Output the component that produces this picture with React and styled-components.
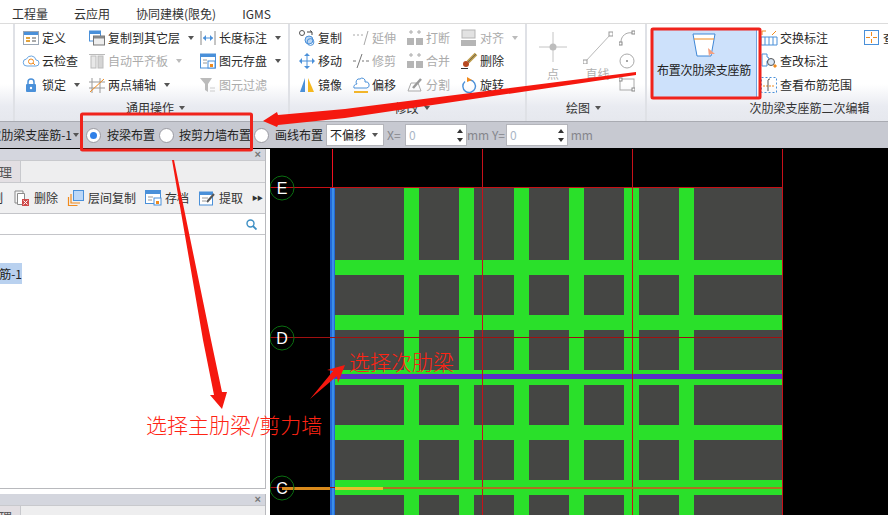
import React from 'react';
import styled, { createGlobalStyle } from 'styled-components';

const Global = createGlobalStyle`
  html, body { margin: 0; padding: 0; background: #fff; }
  * { box-sizing: border-box; }
`;
const FONT = `"Noto Sans CJK SC", "Liberation Sans", sans-serif`;

const Page = styled.div`
  position: relative; width: 888px; height: 515px; overflow: hidden;
  font: 12px/1 ${FONT}; color: #2a2a2a; background: #fff;
  display: flex; flex-direction: column;
`;
const MenuBar = styled.div`
  height: 24px; flex: none; display: flex; align-items: center; gap: 26px;
  padding: 5px 0 0 12px; border-bottom: 1px solid #dcdcdc; color: #333;
  background: #fff;
`;
const Ribbon = styled.div`
  height: 98px; flex: none; display: flex;
  background: linear-gradient(#fff 0%, #fff 62%, #e9ebf1 85%, #e6e8ee 100%);
  border-bottom: 1px solid #a9abb2;
`;
const Group = styled.div`
  width: ${p => p.$w}px; flex: none; display: flex; flex-direction: column;
  padding: 2px 0 4px ${p => p.$pad || 0}px; position: relative; overflow: hidden;
  border-right: ${p => p.$last ? 'none' : '2px solid #dfe1e6'};
`;
const GroupBody = styled.div`
  display: flex; height: 74px; flex: none;
`;
const Col = styled.div`
  width: ${p => p.$w}px; flex: none; display: flex; flex-direction: column;
`;
const Item = styled.div`
  height: 23.5px; display: flex; align-items: center; gap: 3px; white-space: nowrap;
  color: ${p => p.$off ? '#ababab' : '#2a2a2a'};
`;
const IconBox = styled.span`
  width: 16px; height: 17px; flex: none; display: inline-flex; align-items: center; justify-content: center;
  svg { display: block; overflow: visible; }
`;
const Caret = styled.span`
  width: 0; height: 0; margin-left: ${p => p.$gap ?? 5}px; border: 3px solid transparent;
  border-top: 4px solid ${p => p.$off ? '#bbb' : '#555'}; border-bottom: 0;
`;
const GroupTitle = styled.div`
  height: 16px; display: flex; align-items: center; justify-content: center; color: #333;
  margin-left: ${p => p.$shift || 0}px;
`;
const BigTool = styled.div`
  width: ${p => p.$w}px; flex: none; display: flex; flex-direction: column; align-items: center;
  color: #b0b0b0; padding-top: 4px; gap: 4px;
`;
const PrimaryButton = styled.div`
  width: 106px; height: 70px; margin: 2px 4px 0 4px; flex: none;
  background: #cde1fb; border: 1px solid #6fa3df;
  display: flex; flex-direction: column; align-items: center; padding-top: 4px; gap: 7px;
  color: #222; white-space: nowrap; letter-spacing: -0.02em;
`;
const OptionBar = styled.div`
  height: 27px; flex: none; display: flex; align-items: center; background: #c7c9d1;
  border-bottom: 1px solid #000; white-space: nowrap; color: #222;
`;
const Clipped = styled.div`
  width: 72px; overflow: hidden; display: flex; justify-content: flex-end; flex: none; margin-right: 1px;
`;
const Radio = styled.span`
  width: 15px; height: 15px; border-radius: 50%; background: #fff; border: 1px solid #9a9aa2; flex: none;
  display: inline-flex; align-items: center; justify-content: center; margin: ${p => p.$m};
  &::after { content: ''; width: 7px; height: 7px; border-radius: 50%; background: ${p => p.$on ? '#2f80e8' : 'transparent'}; }
`;
const OptionLabel = styled.span`
  width: ${p => p.$w}px; flex: none; color: ${p => p.$off ? '#85868c' : '#222'};
  font-size: 12px;
`;
const Select = styled.div`
  width: 58px; height: 22px; background: #fff; border: 1px solid #b4b5bb; display: flex; align-items: center;
  justify-content: space-between; padding: 0 5px 0 3px; flex: none; margin-right: 3px;
`;
const Spin = styled.div`
  width: 62px; height: 22px; background: #fff; border: 1px solid #b4b5bb; flex: none; display: flex;
  align-items: center; justify-content: space-between; padding: 0 3px 0 3px; color: #a9b6c6;
`;
const SpinArrows = styled.span`
  display: flex; flex-direction: column; gap: 5px;
  &::before, &::after { content: ''; width: 0; height: 0; border: 3px solid transparent; }
  &::before { border-bottom: 4px solid #333; border-top: 0; }
  &::after { border-top: 4px solid #333; border-bottom: 0; }
`;
const Main = styled.div`
  flex: 1; min-height: 0; display: flex;
`;
const Side = styled.div`
  width: 270px; flex: none; display: flex; flex-direction: column; gap: 5px; padding-right: 4px; background: #fff;
`;
const Panel = styled.div`
  flex: ${p => p.$fill ? 1 : 'none'}; height: ${p => p.$fill ? 'auto' : '21px'}; min-height: 0; display: flex; flex-direction: column;
  border-right: 1px solid #b8b9bd; border-bottom: ${p => p.$fill ? '1px solid #b8b9bd' : 'none'}; overflow: hidden;
`;
const PanelHead = styled.div`
  height: 11px; flex: none; background: #d4d6de; display: flex; justify-content: flex-end; align-items: center;
  padding-right: 4px; color: #777; font: bold 11px/1 "Liberation Sans", sans-serif;
`;
const Tabs = styled.div`
  height: 23px; flex: none; display: flex; background: #eeeeef; border-top: 1px solid #c8c9cd; border-bottom: 1px solid #c8c9cd;
`;
const Tab = styled.div`
  width: 21px; background: #e3dfe3; border-right: 1px solid #c8c9cd; overflow: hidden; display: flex; justify-content: flex-end;
  align-items: center; font-size: 13px; color: #555; padding-right: 8px;
`;
const PanelTools = styled.div`
  height: 31px; flex: none; background: #f0f0f1; border-bottom: 1px solid #c4c5c9; display: flex; align-items: center;
  color: #333; white-space: nowrap;
`;
const ClippedTool = styled.div`
  width: 14px; flex: none; display: flex; overflow: hidden;
  span { width: 3px; display: flex; justify-content: flex-end; overflow: hidden; }
`;
const PanelTool = styled.div`
  display: flex; align-items: center; gap: 4px; width: ${p => p.$w}px; flex: none;
`;
const More = styled.span`
  font-size: 6px; color: #333; letter-spacing: -1px; margin-left: -3px;
`;
const Search = styled.div`
  height: 21px; flex: none; background: #fff; border-bottom: 1px solid #c4c5c9; display: flex; align-items: center;
  justify-content: flex-end; padding-right: 8px;
`;
const Tree = styled.div`
  flex: 1; background: #fff; padding-top: 28px;
`;
const TreeRow = styled.div`
  width: 22px; height: 21px; background: #b9d1ef; overflow: hidden; display: flex; align-items: center; justify-content: flex-end; color: #222;
  white-space: nowrap;
`;
const Canvas = styled.div`
  flex: 1; background: #000; overflow: hidden;
  svg { display: block; }
`;
const Overlay = styled.svg`
  position: absolute; left: 0; top: 0; pointer-events: none;
`;
const Callout = styled.div`
  position: absolute; left: ${p => p.$x}px; top: ${p => p.$y}px; color: #ff2414; font-size: 21px; line-height: 1;
  white-space: nowrap; font-weight: 300;
`;

const S = ({ children, w = 16, h = 16 }) => <svg width={w} height={h} viewBox={`0 0 ${w} ${h}`} fill="none">{children}</svg>;
const B = '#4a90d9', G = '#a8a8a8', O = '#f08a1d';
const icons = {
  define: <S><rect x=".5" y="1.5" width="15" height="13" fill="#fff" stroke="#9aa6b5"/><rect x="1" y="2" width="14" height="3" fill={B}/><path d="M3 8h4M3 11h4" stroke="#e3a33c" strokeWidth="2"/><path d="M9 8h4M9 11h4" stroke="#aaa" strokeWidth="2"/></S>,
  copyLayer: <S><rect x=".5" y="1" width="11" height="10" fill="#fff" stroke={B}/><rect x="1" y="1" width="10" height="3" fill={B}/><rect x="4.5" y="6" width="11" height="9" fill="#eee" stroke="#777"/><rect x="5" y="6" width="10" height="2.5" fill="#888"/></S>,
  length: <S><path d="M1 1v14M15 1v14" stroke="#8a8a8a"/><path d="M3 8h10" stroke={B}/><path d="M3 8l3-3v6zM13 8l-3-3v6z" fill={B}/></S>,
  cloud: <S><path d="M4 13a3.5 3.5 0 0 1-.5-7 5 5 0 0 1 9.5 1 3 3 0 0 1 0 6z" fill="#fff" stroke="#6aa5e0"/><circle cx="8" cy="8.5" r="2.5" stroke={O}/><path d="M10 10l2 2" stroke={O}/></S>,
  autoAlign: <S><path d="M0 1.5h16" stroke="#bbb"/><rect x="2" y="3" width="5" height="12" fill="#e8e8e8" stroke="#bbb"/><rect x="9" y="3" width="5" height="12" fill="#d5d5d5" stroke="#bbb"/></S>,
  save: <S><rect x=".5" y="1" width="15" height="14" fill="#fff" stroke={B}/><rect x="1" y="1" width="14" height="3" fill={B}/><path d="M3 7h4M3 10h4" stroke="#999"/><rect x="8" y="8" width="7" height="7" fill="#fff" stroke={B}/><rect x="10" y="11" width="3" height="3" fill={O}/></S>,
  lock: <S><path d="M5 8V5a3 3 0 0 1 6 0v3" stroke={B} strokeWidth="1.5"/><rect x="3" y="7" width="10" height="8" rx="1" fill={B}/><circle cx="8" cy="11" r="1.2" fill="#fff"/></S>,
  twoPoint: <S><path d="M3 1v15M11 1v15M0 5h16M0 11h16" stroke="#999"/><path d="M1 15L15 2" stroke={O}/></S>,
  filter: <S><path d="M0 1h12L8 7v8l-3-2V7z" fill="#bbb"/><path d="M10 11h5M10 14h5" stroke="#ccc"/></S>,
  copy: <S><circle cx="3" cy="3" r="2.5" stroke="#555"/><circle cx="10" cy="10" r="4" fill="#bcd6f2" stroke={B}/><circle cx="11.5" cy="12" r="3.4" stroke={B}/><path d="M8 2h5l-2-1.5M13 2v3" stroke="#444"/></S>,
  extend: <S><path d="M0 5h2M4 5h2M8 5h2" stroke={G}/><path d="M11 15L15 1" stroke={G}/></S>,
  split: <S><path d="M4 0v4M12 0v4M2 2h4M10 2h4" stroke="#aaa"/><rect x="0" y="8" width="7" height="7" fill="#b5b5b5"/><rect x="9" y="8" width="7" height="7" fill="#b5b5b5"/></S>,
  align: <S><rect x="1" y="0" width="13" height="8" fill="#e2e2e2" stroke="#b5b5b5"/><rect x="0" y="10" width="15" height="6" fill="#b5b5b5"/></S>,
  move: <S><path d="M8 1v14M1 8h14" stroke={B}/><path d="M8 0l3 3H5zM8 16l3-3H5zM0 8l3-3v6zM16 8l-3-3v6z" fill={B}/></S>,
  trim: <S><path d="M4 15L9 1" stroke="#777"/><path d="M0 8h3M9 8h2M13 8h3" stroke="#777"/></S>,
  erase: <S><path d="M15 1L7 9" stroke="#bb9a4a" strokeWidth="3.5"/><path d="M15 1L7 9" stroke="#555" strokeWidth=".7"/><circle cx="5" cy="11" r="3" fill="#b84a22"/><path d="M0 15.5h7" stroke="#333"/></S>,
  mirror: <S><path d="M6 1v14H1z" fill={B}/><path d="M9 1v14h6z" fill="#f5b81e"/></S>,
  offset: <S><path d="M1 11a3 3 0 0 1 3-4 3 3 0 0 1 3-5 3 3 0 0 1 5 3 3 3 0 0 1 2 6z" stroke={B} fill="#fff"/><path d="M1 15h14" stroke="#f2b52a" strokeWidth="2"/></S>,
  divide: <S><path d="M1 14L4 6h7l3 8z" stroke="#aaa"/><path d="M6 11L14 2" stroke="#999" strokeWidth="2.5"/></S>,
  rotate: <S><path d="M9 3a6.3 6.3 0 1 1-5 1.5" stroke={B} strokeWidth="1.4"/><path d="M6 0l5 3-5 2z" fill={O}/></S>,
  exch: <S><path d="M1 5V1h4M15 1l-4 4" stroke={O}/><path d="M0 7h16v8H0zM4 7v8M8 7v8M12 7v8" stroke={B}/></S>,
  edit: <S><path d="M1 1h5v3a2 2 0 0 1 0 4v5H1z" stroke={B}/><circle cx="10" cy="9" r="3.5" stroke="#555" fill="#d9e6f5"/><path d="M13 12l2 2" stroke={O} strokeWidth="3"/></S>,
  range: <S><rect x=".5" y=".5" width="15" height="15" stroke={B} strokeDasharray="2 2"/><path d="M2 9h12" stroke={O} strokeDasharray="2 1"/><path d="M7 3a2 2 0 0 1 2-1M7 3v11" stroke="#555"/></S>,
  view: <S><rect x=".5" y=".5" width="14" height="14" stroke={B}/><path d="M7.5 2v4M7.5 9v4M2 7.5h4M9 7.5h4" stroke={O}/></S>,
  del: <S><path d="M1 1h8v12H1z" fill="#f6f6f6" stroke="#8a8a8a"/><path d="M3.5 3.5h7v11h-7z" fill="#fff" stroke="#8a8a8a"/><rect x="8" y="9" width="7" height="7" fill="#cf4b4b"/><path d="M9.5 10.5l4 4M13.5 10.5l-4 4" stroke="#fff"/></S>,
  floor: <S><rect x="5.5" y=".5" width="10" height="10" fill="#bcd8f8" stroke={B}/><path d="M3 4v9h9" stroke={O} strokeWidth="1.2"/><path d="M.5 7v8.5h9" stroke={O} strokeWidth="1.2"/></S>,
  archive: <S><rect x=".5" y=".5" width="15" height="13" fill="#fff" stroke={B}/><rect x="1" y="1" width="14" height="3" fill={B}/><path d="M3 7h5M3 10h4" stroke="#999"/><rect x="9" y="8" width="7" height="7" fill="#fff" stroke={B}/><rect x="11" y="11" width="3" height="3" fill={O}/></S>,
  extract: <S><rect x=".5" y="2" width="13" height="13" fill="#fff" stroke={B}/><rect x="1" y="2" width="12" height="3" fill={B}/><path d="M3 8h6M3 11h4" stroke="#999"/><path d="M15 4L8 12" stroke="#555" strokeWidth="2"/></S>,
};
const Tool = ({ icon, children, off, caret }) => (
  <Item $off={off}>
    <IconBox>{icons[icon]}</IconBox>
    {children}
    {caret && <Caret $off={off} />}
  </Item>
);

const VBARS = [404, 459, 514, 569, 624, 679];
const HBARS = [260, 315, 370, 425, 480];
const Cad = () => (
  <svg width="618" height="366" viewBox="270 149 618 366">
    <rect x="335" y="187" width="447" height="328" fill="#454644" />
    {HBARS.map(y => <rect key={y} x="335" y={y} width="447" height="15" fill="#2ae02a" />)}
    {VBARS.map(x => <rect key={x} x={x} y="187" width="15" height="328" fill="#2ae02a" />)}
    <rect x="335" y="374" width="447" height="5" fill="#5a2fc8" />
    {[332.5, 482.5, 632.5, 782.5].map(x => <path key={x} d={`M${x} 149V515`} stroke="#c8101a" strokeWidth="1" />)}
    <path d="M332.5 149V187" stroke="#f01020" />
    <rect x="330" y="187" width="5" height="328" fill="#2469d6" />
    <rect x="332" y="187" width="2" height="328" fill="#3a8ee8" />
    {[187.5, 337.5, 487.5].map((y, i) => <path key={y} d={`M270 ${y}H782`} stroke={i === 0 ? '#c80f14' : '#a01010'} strokeWidth="1" />)}
    <rect x="282" y="487" width="48" height="3" fill="#d98a1c" />
    <rect x="335" y="487" width="48" height="3" fill="#e8c02c" />
    <rect x="383" y="487" width="399" height="2" fill="#b07020" />
    {[['E', 188], ['D', 338], ['C', 488]].map(([t, y]) => (
      <g key={t}>
        <circle cx="282" cy={y} r="12" fill="none" stroke="#0a6e10" strokeWidth="1" />
        <text x="282" y={y + 6} textAnchor="middle" fill="#fff" fontFamily="Liberation Sans, sans-serif" fontSize="16">{t}</text>
      </g>
    ))}
  </svg>
);

export default function App() {
  return (
    <Page>
      <Global />
      <MenuBar>
        <span>工程量</span><span>云应用</span><span>协同建模(限免)</span><span>IGMS</span>
      </MenuBar>
      <Ribbon>
        <Group $w={15} />
        <Group $w={275} $pad={8}>
          <GroupBody>
            <Col $w={66}>
              <Tool icon="define">定义</Tool>
              <Tool icon="cloud">云检查</Tool>
              <Tool icon="lock" caret>锁定</Tool>
            </Col>
            <Col $w={111}>
              <Tool icon="copyLayer" caret>复制到其它层</Tool>
              <Tool icon="autoAlign" off caret>自动平齐板</Tool>
              <Tool icon="twoPoint" caret>两点辅轴</Tool>
            </Col>
            <Col $w={85}>
              <Tool icon="length" caret>长度标注</Tool>
              <Tool icon="save" caret>图元存盘</Tool>
              <Tool icon="filter" off>图元过滤</Tool>
            </Col>
          </GroupBody>
          <GroupTitle>通用操作<Caret /></GroupTitle>
        </Group>
        <Group $w={237} $pad={9}>
          <GroupBody>
            <Col $w={54}>
              <Tool icon="copy">复制</Tool>
              <Tool icon="move">移动</Tool>
              <Tool icon="mirror">镜像</Tool>
            </Col>
            <Col $w={54}>
              <Tool icon="extend" off>延伸</Tool>
              <Tool icon="trim" off>修剪</Tool>
              <Tool icon="offset">偏移</Tool>
            </Col>
            <Col $w={54}>
              <Tool icon="split" off>打断</Tool>
              <Tool icon="split" off>合并</Tool>
              <Tool icon="divide" off>分割</Tool>
            </Col>
            <Col $w={60}>
              <Tool icon="align" off caret>对齐</Tool>
              <Tool icon="erase">删除</Tool>
              <Tool icon="rotate">旋转</Tool>
            </Col>
          </GroupBody>
          <GroupTitle>修改<Caret /></GroupTitle>
        </Group>
        <Group $w={120} $pad={3}>
          <GroupBody>
            <BigTool $w={46}>
              <S w={30} h={34}><path d="M15 2v30M1 17h28" stroke="#c4c4c4" /><circle cx="15" cy="17" r="3.5" fill="#bdbdbd" /></S>
              点
            </BigTool>
            <BigTool $w={43}>
              <S w={30} h={34}><path d="M2 32L28 4" stroke="#b8b8b8" /><rect x="0" y="30" width="4" height="4" fill="#fff" stroke="#999" /><rect x="26" y="2" width="4" height="4" fill="#fff" stroke="#999" /></S>
              直线
            </BigTool>
            <Col $w={24}>
              <Item><S w={16} h={16}><path d="M2 12a9 9 0 0 1 11-9" stroke="#aaa" /><rect x="0" y="12" width="3" height="3" stroke="#888" /><rect x="13" y="1" width="3" height="3" stroke="#888" /></S></Item>
              <Item><S w={16} h={16}><circle cx="8" cy="8" r="7" stroke="#aaa" /><circle cx="8" cy="8" r="1" fill="#888" /></S></Item>
              <Item><S w={16} h={16}><rect x="1" y="2" width="14" height="11" stroke="#aaa" /><rect x="0" y="1" width="3" height="3" fill="#fff" stroke="#888" /><rect x="13" y="11" width="3" height="3" fill="#fff" stroke="#888" /></S></Item>
            </Col>
          </GroupBody>
          <GroupTitle $shift={-8}>绘图<Caret /></GroupTitle>
        </Group>
        <Group $w={241} $last>
          <GroupBody>
            <PrimaryButton>
              <S w={24} h={24}><path d="M1 1h22l-4 22H5z" fill="#fff" stroke="#3f87d6" strokeWidth="1" /><path d="M2 6h20" stroke={O} strokeWidth="1" /><path d="M16 15l7 6-5 0-1 3z" fill="#f3a080" /></S>
              布置次肋梁支座筋
            </PrimaryButton>
            <Col $w={103}>
              <Tool icon="exch">交换标注</Tool>
              <Tool icon="edit">查改标注</Tool>
              <Tool icon="range">查看布筋范围</Tool>
            </Col>
            <Col $w={24}>
              <Tool icon="view">查看</Tool>
            </Col>
          </GroupBody>
          <GroupTitle $shift={84}>次肋梁支座筋二次编辑</GroupTitle>
        </Group>
      </Ribbon>
      <OptionBar>
        <Clipped><span>次肋梁支座筋-1</span></Clipped>
        <Caret $gap={0} />
        <Radio $on $m="0 6px 0 7px" />
        <OptionLabel $w={52}>按梁布置</OptionLabel>
        <Radio $m="0 5px 0 0" />
        <OptionLabel $w={75}>按剪力墙布置</OptionLabel>
        <Radio $m="0 6px 0 0" />
        <OptionLabel $w={51}>画线布置</OptionLabel>
        <Select>不偏移<Caret /></Select>
        <OptionLabel $w={18} $off>X=</OptionLabel>
        <Spin>0<SpinArrows /></Spin>
        <OptionLabel $w={39} $off>mm Y=</OptionLabel>
        <Spin>0<SpinArrows /></Spin>
        <OptionLabel $w={24} $off>&nbsp;mm</OptionLabel>
      </OptionBar>
      <Main>
        <Side>
          <Panel $fill>
            <PanelHead>×</PanelHead>
            <Tabs><Tab>理</Tab></Tabs>
            <PanelTools>
              <ClippedTool><span>制</span></ClippedTool>
              <PanelTool $w={54}><IconBox>{icons.del}</IconBox>删除</PanelTool>
              <PanelTool $w={77}><IconBox>{icons.floor}</IconBox>层间复制</PanelTool>
              <PanelTool $w={54}><IconBox>{icons.archive}</IconBox>存档</PanelTool>
              <PanelTool $w={56}><IconBox>{icons.extract}</IconBox>提取</PanelTool>
              <More>▶▶</More>
            </PanelTools>
            <Search>
              <svg width="11" height="11" viewBox="0 0 11 11" fill="none"><circle cx="4.5" cy="4.5" r="3.5" stroke="#3d8fc4" strokeWidth="1.4" /><path d="M7 7l3.5 3.5" stroke="#3d8fc4" strokeWidth="1.8" /></svg>
            </Search>
            <Tree><TreeRow>筋-1</TreeRow></Tree>
          </Panel>
          <Panel>
            <PanelHead>×</PanelHead>
            <Tabs><Tab>理</Tab></Tabs>
          </Panel>
        </Side>
        <Canvas><Cad /></Canvas>
      </Main>
      <Overlay width="888" height="515" viewBox="0 0 888 515">
        <rect x="81.5" y="114" width="170" height="36" fill="none" stroke="#f0231c" strokeWidth="3" rx="1" />
        <rect x="652" y="29" width="108" height="69" fill="none" stroke="#f0231c" strokeWidth="3" rx="1" />
        <path d="M263 121L277 112L278 115L345 109L636 72L636 75L345 118L278 125L277 127Z" fill="#f5180f" />
        <path d="M172 160L174 160L211 340L222 392L227 392L222 409L210 395L214 395L203 340Z" fill="#f5180f" />
        <path d="M310 399L333 371L327 370L345 365L338 383L337 376Z" fill="#f5180f" />
      </Overlay>
      <Callout $x={146} $y={414}>选择主肋梁/剪力墙</Callout>
      <Callout $x={349} $y={351}>选择次肋梁</Callout>
    </Page>
  );
}
